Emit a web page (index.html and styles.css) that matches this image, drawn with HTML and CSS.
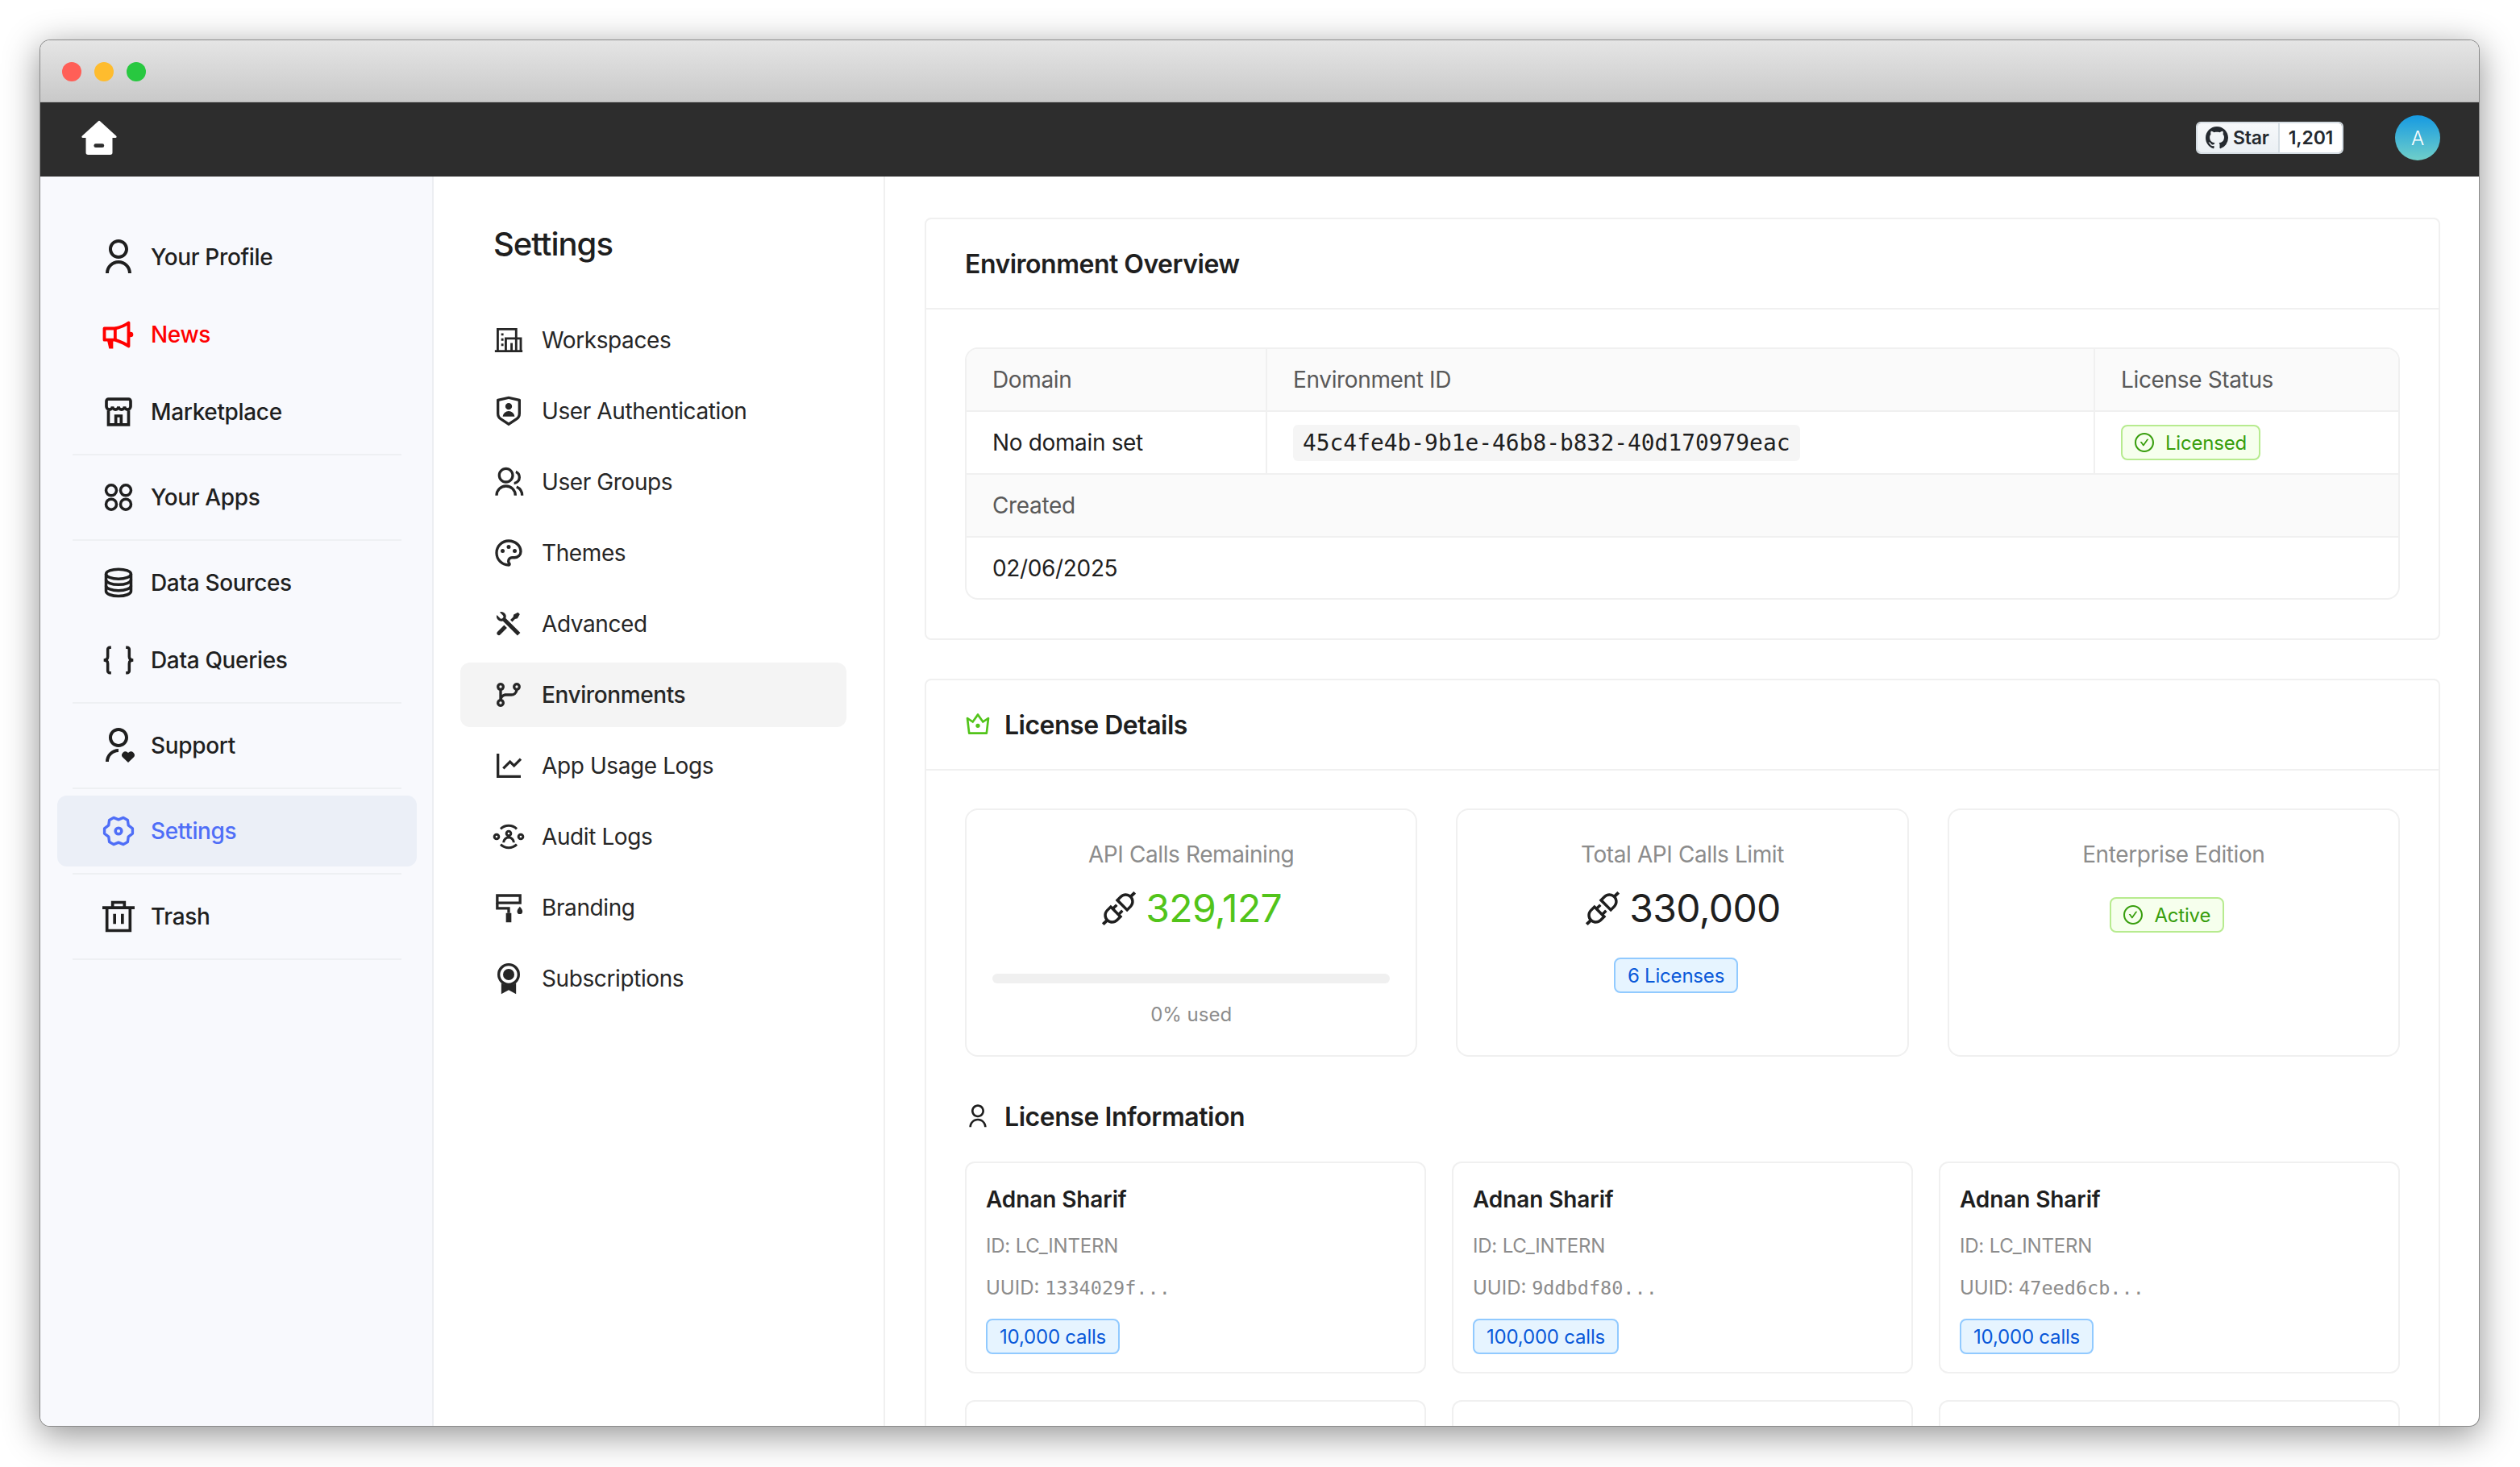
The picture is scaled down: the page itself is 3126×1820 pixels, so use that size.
FILE: index.html
```html
<!DOCTYPE html>
<html lang="en">
<head>
<meta charset="utf-8">
<title>Environments</title>
<link rel="stylesheet" href="styles.css">
</head>
<body>
<div class="window">
  <div class="titlebar"><span class="light red"></span><span class="light yellow"></span><span class="light green"></span></div>
  <header class="topnav">
    <svg class="home" viewBox="0 0 24 24"><path fill="#fff" d="M11.3.8a1 1 0 0 1 1.4 0l10.9 10a.7.7 0 0 1-.5 1.2H21v10a1.5 1.5 0 0 1-1.5 1.5h-15A1.5 1.5 0 0 1 3 22V12H.9a.7.7 0 0 1-.5-1.2z"/><rect x="8.4" y="16" width="7" height="2.6" rx="1.3" fill="#2d2d2d"/></svg>
    <div class="nav-right">
      <div class="gh">
        <span class="gh-left"><svg class="gh-mark" viewBox="0 0 16 16"><path fill="#24292f" d="M8 0C3.58 0 0 3.58 0 8c0 3.54 2.29 6.53 5.47 7.59.4.07.55-.17.55-.38 0-.19-.01-.82-.01-1.49-2.01.37-2.53-.49-2.69-.94-.09-.23-.48-.94-.82-1.13-.28-.15-.68-.52-.01-.53.63-.01 1.08.58 1.23.82.72 1.21 1.87.87 2.33.66.07-.52.28-.87.51-1.07-1.78-.2-3.64-.89-3.64-3.95 0-.87.31-1.59.82-2.15-.08-.2-.36-1.02.08-2.12 0 0 .67-.21 2.2.82.64-.18 1.32-.27 2-.27.68 0 1.36.09 2 .27 1.53-1.04 2.2-.82 2.2-.82.44 1.1.16 1.92.08 2.12.51.56.82 1.27.82 2.15 0 3.07-1.87 3.75-3.65 3.95.29.25.54.73.54 1.48 0 1.07-.01 1.93-.01 2.2 0 .21.15.46.55.38A8.013 8.013 0 0016 8c0-4.42-3.58-8-8-8z"/></svg>Star</span>
        <span class="gh-count">1,201</span>
      </div>
      <div class="avatar">A</div>
    </div>
  </header>
  <div class="shell">
    <aside class="sidebar">
      <a class="side-item"><svg class="side-icon big" viewBox="0 0 24 24"><path fill="currentColor" d="M4 22C4 17.5817 7.58172 14 12 14C16.4183 14 20 17.5817 20 22H18C18 18.6863 15.3137 16 12 16C8.68629 16 6 18.6863 6 22H4ZM12 13C8.685 13 6 10.315 6 7C6 3.685 8.685 1 12 1C15.315 1 18 3.685 18 7C18 10.315 15.315 13 12 13ZM12 11C14.21 11 16 9.21 16 7C16 4.79 14.21 3 12 3C9.79 3 8 4.79 8 7C8 9.21 9.79 11 12 11Z"/></svg>Your Profile</a>
      <a class="side-item news"><svg class="side-icon" viewBox="0 0 24 24"><g fill="none" stroke="currentColor" stroke-width="2.3" stroke-linejoin="round"><path d="M1.5 7.5H9.5V16H1.5z"/><path d="M9.500 7.500C13 6.800 16.500 5.500 19.500 3.300V20.700C16.500 18.500 13 17.200 9.500 16"/></g><path fill="currentColor" d="M3.500 16H8V22.500H5zM20 10h1a2 2 0 0 1 0 4h-1z"/></svg>News</a>
      <a class="side-item"><svg class="side-icon" viewBox="0 0 24 24"><g fill="none" stroke="currentColor" stroke-width="2.2"><path d="M4.500 11v10.500h15V11"/><path d="M4.500 2.500h15A1.500 1.500 0 0 1 21 4V8a2.250 2.250 0 0 1-4.500 0 2.250 2.250 0 0 1-4.500 0 2.250 2.250 0 0 1-4.500 0A2.250 2.250 0 0 1 3 8V4a1.500 1.500 0 0 1 1.500-1.500z"/><path d="M10 21.500V15h4v6.500"/></g></svg>Marketplace</a>
      <div class="side-divider"></div>
      <a class="side-item"><svg class="side-icon" viewBox="0 0 24 24"><g fill="none" stroke="currentColor" stroke-width="2.1"><circle cx="6.600" cy="6.800" r="3.900"/><circle cx="17.400" cy="6.800" r="3.900"/><circle cx="6.600" cy="17.200" r="3.900"/><circle cx="17.400" cy="17.200" r="3.900"/></g></svg>Your Apps</a>
      <div class="side-divider"></div>
      <a class="side-item"><svg class="side-icon" viewBox="0 0 24 24"><g fill="none" stroke="currentColor" stroke-width="2.1"><ellipse cx="12" cy="5.500" rx="9.300" ry="3.600"/><path d="M2.700 5.500v12.800c0 2 4.200 3.600 9.300 3.600s9.300-1.600 9.300-3.600V5.500"/><path d="M2.700 9.800c0 2 4.200 3.600 9.300 3.600s9.300-1.600 9.300-3.600"/><path d="M2.700 14.200c0 2 4.200 3.600 9.300 3.600s9.300-1.600 9.300-3.600"/></g></svg>Data Sources</a>
      <a class="side-item"><svg class="side-icon" viewBox="0 0 24 24"><g fill="none" stroke="currentColor" stroke-width="2.1"><path d="M6.500 2.500h-1A1.500 1.500 0 0 0 4 4v5.500c0 1.400-.8 2.500-3 2.500 2.200 0 3 1.100 3 2.500V20a1.500 1.500 0 0 0 1.500 1.500h1"/><path d="M17.500 2.500h1A1.500 1.500 0 0 1 20 4v5.500c0 1.400.8 2.500 3 2.500-2.200 0-3 1.100-3 2.500V20a1.500 1.500 0 0 1-1.500 1.500h-1"/></g></svg>Data Queries</a>
      <div class="side-divider"></div>
      <a class="side-item"><svg class="side-icon big" viewBox="0 0 24 24"><path fill="currentColor" d="M12 14v2a6 6 0 0 0-6 6H4a8 8 0 0 1 8-8zm0-1c-3.315 0-6-2.685-6-6s2.685-6 6-6 6 2.685 6 6-2.685 6-6 6zm0-2c2.210 0 4-1.790 4-4s-1.790-4-4-4-4 1.790-4 4 1.790 4 4 4z"/><path fill="currentColor" d="M18 22.500l-3.400-3.200a2.200 2.200 0 0 1 3.100-3.100l.3.300.3-.3a2.200 2.200 0 0 1 3.100 3.100z"/></svg>Support</a>
      <div class="side-divider"></div>
      <a class="side-item active"><svg class="side-icon" viewBox="-1 -1 26 26"><path fill="none" stroke="currentColor" stroke-width="2.200" stroke-linejoin="round" d="M12 2.800L15.930 1.190 19.390 3.190 19.970 7.400 23.330 10V14L19.970 16.600 19.390 20.810 15.930 22.810 12 21.200 8.070 22.810 4.610 20.810 4.030 16.600 .67 14V10L4.030 7.400 4.610 3.190 8.070 1.190Z"/><circle cx="12" cy="12" r="2.500" fill="none" stroke="currentColor" stroke-width="2.300"/></svg>Settings</a>
      <div class="side-divider"></div>
      <a class="side-item"><svg class="side-icon" viewBox="0 0 24 24"><g fill="none" stroke="currentColor" stroke-width="2.2"><path d="M0 5.500h24"/><path d="M3.400 5.500v17h17.200v-17"/><path d="M7.600 5.500V1.500h8.800v4"/></g><path fill="currentColor" d="M8 10h2.200v7.600H8zM13.800 10H16v7.600h-2.200z"/></svg>Trash</a>
      <div class="side-divider"></div>
    </aside>
    <nav class="settings">
      <h2 class="settings-title">Settings</h2>
      <a class="set-item"><svg class="set-icon" viewBox="-2 -2 28 28"><g fill="none" stroke="currentColor" stroke-width="2"><path d="M0 21.500h24"/><path d="M2.500 21.500V2.500h16v19"/><path d="M9.500 21.500V10.500h13v11"/><path d="M14.500 21.500v-7"/></g><path fill="currentColor" d="M5.500 6h2v2h-2zM5.500 10.500h2v2h-2zM5.500 15h2v2h-2z"/></svg>Workspaces</a>
      <a class="set-item"><svg class="set-icon" viewBox="0 0 24 24"><path fill="currentColor" d="M3.783 2.826L12 1l8.217 1.826a1 1 0 0 1 .783.976v9.987a6 6 0 0 1-2.672 4.992L12 23l-6.328-4.219A6 6 0 0 1 3 13.790V3.802a1 1 0 0 1 .783-.976zM5 4.604v9.185a4 4 0 0 0 1.781 3.328L12 20.597l5.219-3.480A4 4 0 0 0 19 13.790V4.604L12 3.050 5 4.604zM12 11a2.500 2.500 0 1 1 0-5 2.500 2.500 0 0 1 0 5zm-4.473 5a4.500 4.500 0 0 1 8.946 0H7.527z"/></svg>User Authentication</a>
      <a class="set-item"><svg class="set-icon" viewBox="0 0 24 24"><path fill="currentColor" d="M2 22a8 8 0 1 1 16 0h-2a6 6 0 1 0-12 0H2zm8-9c-3.315 0-6-2.685-6-6s2.685-6 6-6 6 2.685 6 6-2.685 6-6 6zm0-2c2.210 0 4-1.790 4-4s-1.790-4-4-4-4 1.790-4 4 1.790 4 4 4zm8.284 3.703A8.002 8.002 0 0 1 23 22h-2a6.001 6.001 0 0 0-3.537-5.473l.82-1.824zm-.688-11.290A5.500 5.500 0 0 1 21 8.500a5.499 5.499 0 0 1-5 5.478v-2.013a3.500 3.500 0 0 0 1.041-6.609l.555-1.943z"/></svg>User Groups</a>
      <a class="set-item"><svg class="set-icon" viewBox="0 0 24 24"><path fill="currentColor" d="M12 2c5.522 0 10 3.978 10 8.889a5.558 5.558 0 0 1-5.556 5.555h-1.966c-.922 0-1.667.745-1.667 1.667 0 .422.167.811.422 1.100.267.300.434.689.434 1.122C13.667 21.256 12.900 22 12 22 6.478 22 2 17.522 2 12S6.478 2 12 2zm-1.189 16.111a3.664 3.664 0 0 1 3.667-3.667h1.966A3.558 3.558 0 0 0 20 10.890C20 7.139 16.468 4 12 4a8 8 0 0 0-.676 15.972 3.648 3.648 0 0 1-.513-1.860zM7.500 12a1.500 1.500 0 1 1 0-3 1.500 1.500 0 0 1 0 3zm9 0a1.500 1.500 0 1 1 0-3 1.500 1.500 0 0 1 0 3zM12 9a1.500 1.500 0 1 1 0-3 1.500 1.500 0 0 1 0 3z"/></svg>Themes</a>
      <a class="set-item"><svg class="set-icon" viewBox="0 0 24 24"><path fill="currentColor" d="M5.330 3.271a3.500 3.500 0 0 1 4.472 4.474L20.647 18.590l-2.122 2.121L7.680 9.867a3.500 3.500 0 0 1-4.472-4.474L5.444 7.630a1.500 1.500 0 1 0 2.121-2.121L5.329 3.270zm10.367 1.884l3.182-1.768 1.414 1.414-1.768 3.182-1.768.354-2.120 2.121-1.415-1.414 2.121-2.121.354-1.768zm-7.071 7.778l2.121 2.122-4.950 4.950A1.500 1.500 0 0 1 3.580 17.990l.097-.107 4.950-4.950z"/></svg>Advanced</a>
      <a class="set-item current"><svg class="set-icon" viewBox="0 0 24 24"><path fill="currentColor" d="M7.105 15.210A3.001 3.001 0 1 1 5 15.170V8.830a3.001 3.001 0 1 1 2 0V12c.836-.628 1.874-1 3-1h4a3.001 3.001 0 0 0 2.895-2.210 3.001 3.001 0 1 1 2.032.064A5.001 5.001 0 0 1 14 13h-4a3.001 3.001 0 0 0-2.895 2.210zM6 17a1 1 0 1 0 0 2 1 1 0 0 0 0-2zM6 5a1 1 0 1 0 0 2 1 1 0 0 0 0-2zm12 0a1 1 0 1 0 0 2 1 1 0 0 0 0-2z"/></svg>Environments</a>
      <a class="set-item"><svg class="set-icon" viewBox="0 0 24 24"><path fill="currentColor" d="M5 3v16h16v2H3V3h2zm15.293 3.293l1.414 1.414L16 13.414l-3-2.999-4.293 4.292-1.414-1.414L13 7.586l3 2.999 4.293-4.292z"/></svg>App Usage Logs</a>
      <a class="set-item"><svg class="set-icon" viewBox="0 0 24 24"><g fill="none" stroke="currentColor" stroke-width="1.800"><circle cx="3" cy="12" r="1.700"/><circle cx="21" cy="12" r="1.700"/><circle cx="12" cy="9.600" r="1.700"/><path d="M8.200 16.400a3.800 3.800 0 0 1 7.600 0"/><path d="M6 6.200a8.600 8.600 0 0 1 12 0"/><path d="M6 17.800a8.600 8.600 0 0 0 12 0"/></g></svg>Audit Logs</a>
      <a class="set-item"><svg class="set-icon" viewBox="0 0 24 24"><g fill="none" stroke="currentColor" stroke-width="2"><path d="M3.500 3h17v5.500h-17z"/><path d="M3.500 8.500v4H12V16"/></g><path fill="currentColor" d="M10 16h4v7h-4zM20.300 11.300c1 1.400 2 2.300 2 3.500a2 2 0 0 1-4 0c0-1.200 1-2.100 2-3.500z"/></svg>Branding</a>
      <a class="set-item"><svg class="set-icon" viewBox="0 0 24 24"><circle cx="12" cy="9" r="7.400" fill="none" stroke="currentColor" stroke-width="2"/><circle cx="12" cy="9" r="4.200" fill="currentColor"/><path fill="currentColor" d="M6.500 15.500c3 2 8 2 11 0V23.500L12 20.600 6.500 23.500z"/></svg>Subscriptions</a>
    </nav>
    <main class="main">
      <section class="card">
        <div class="card-head"><h3 class="card-title">Environment Overview</h3></div>
        <div class="card-body">
          <div class="desc">
            <div class="cell label first-col">Domain</div>
            <div class="cell label mid-col">Environment ID</div>
            <div class="cell label">License Status</div>
            <div class="cell first-col">No domain set</div>
            <div class="cell mid-col"><code class="env-id">45c4fe4b-9b1e-46b8-b832-40d170979eac</code></div>
            <div class="cell"><span class="tag tag-green"><svg class="tag-icon" viewBox="64 64 896 896"><path fill="currentColor" d="M699 353h-46.900c-10.200 0-19.900 4.900-25.900 13.300L469 584.300l-71.200-98.800c-6-8.300-15.600-13.300-25.900-13.300H325c-6.500 0-10.300 7.400-6.500 12.700l124.600 172.800a31.800 31.800 0 0 0 51.700 0l210.600-292c3.900-5.300.1-12.700-6.400-12.700z"/><path fill="currentColor" d="M512 64C264.600 64 64 264.600 64 512s200.600 448 448 448 448-200.600 448-448S759.400 64 512 64zm0 820c-205.400 0-372-166.600-372-372s166.600-372 372-372 372 166.600 372 372-166.600 372-372 372z"/></svg>Licensed</span></div>
            <div class="cell label span-all">Created</div>
            <div class="cell span-all last-row">02/06/2025</div>
          </div>
        </div>
      </section>
      <section class="card second">
        <div class="card-head"><svg class="crown" viewBox="0 0 24 24"><path fill="#52c41a" d="M3.492 8.065L4.778 19h14.444l1.286-10.935-4.010 2.673L12 4.441l-4.498 6.297-4.010-2.673zM2.801 5.200L7 8l4.186-5.860a1 1 0 0 1 1.628 0L17 8l4.200-2.800a1 1 0 0 1 1.547.950l-1.643 13.967a1 1 0 0 1-.993.883H3.889a1 1 0 0 1-.993-.883L1.253 6.149A1 1 0 0 1 2.800 5.200zM12 15a2 2 0 1 1 0-4 2 2 0 0 1 0 4z"/></svg><h3 class="card-title">License Details</h3></div>
        <div class="card-body">
          <div class="stats">
            <div class="stat">
              <div class="stat-label">API Calls Remaining</div>
              <div class="stat-value good"><svg class="plug" viewBox="64 64 896 896"><path fill="#1f1f1f" d="M917.700 148.800l-42.400-42.400c-1.600-1.600-3.600-2.300-5.700-2.300s-4.100.8-5.700 2.300l-76.100 76.100a199.270 199.270 0 0 0-112.100-34.300c-51.200 0-102.400 19.500-141.500 58.600L432.300 308.700a8.030 8.030 0 0 0 0 11.300L704 591.700c1.600 1.600 3.600 2.300 5.700 2.300 2 0 4.100-.8 5.700-2.300l101.900-101.900c68.900-69 77-175.700 24.300-253.500l76.100-76.100c3.100-3.200 3.100-8.300 0-11.400zM769.100 441.700l-59.400 59.400-186.800-186.800 59.400-59.400c24.900-24.900 58.100-38.700 93.400-38.700 35.300 0 68.400 13.700 93.400 38.700 24.900 24.900 38.700 58.100 38.700 93.400 0 35.300-13.800 68.400-38.700 93.400zm-190.200 105a8.030 8.030 0 0 0-11.300 0L501 613.300 410.700 523l66.700-66.700c3.100-3.100 3.100-8.200 0-11.300L441 408.600a8.030 8.030 0 0 0-11.300 0L363 475.300l-43-43a7.850 7.850 0 0 0-5.700-2.300c-2 0-4.100.8-5.700 2.300L206.800 534.200c-68.900 69-77 175.700-24.300 253.500l-76.100 76.100a8.030 8.030 0 0 0 0 11.300l42.400 42.400c1.600 1.600 3.600 2.300 5.700 2.300s4.100-.8 5.700-2.300l76.100-76.100c33.700 22.900 72.900 34.300 112.100 34.300 51.200 0 102.400-19.500 141.500-58.600l101.900-101.900c3.100-3.100 3.100-8.200 0-11.300l-43-43 66.700-66.700c3.100-3.100 3.100-8.200 0-11.300l-36.600-36.200zM441.700 769.100a131.320 131.320 0 0 1-93.400 38.700c-35.300 0-68.400-13.700-93.400-38.700a131.320 131.320 0 0 1-38.700-93.400c0-35.300 13.700-68.400 38.700-93.400l59.400-59.400 186.800 186.800-59.400 59.400z"/></svg>329,127</div>
              <div class="bar"></div>
              <div class="bar-note">0% used</div>
            </div>
            <div class="stat">
              <div class="stat-label">Total API Calls Limit</div>
              <div class="stat-value"><svg class="plug" viewBox="64 64 896 896"><path fill="#1f1f1f" d="M917.700 148.800l-42.400-42.400c-1.600-1.600-3.600-2.300-5.700-2.300s-4.100.8-5.700 2.300l-76.100 76.100a199.270 199.270 0 0 0-112.100-34.300c-51.200 0-102.400 19.500-141.500 58.600L432.300 308.700a8.030 8.030 0 0 0 0 11.300L704 591.700c1.600 1.600 3.600 2.300 5.700 2.300 2 0 4.100-.8 5.700-2.300l101.900-101.900c68.900-69 77-175.700 24.300-253.500l76.100-76.100c3.100-3.200 3.100-8.300 0-11.400zM769.100 441.700l-59.400 59.400-186.800-186.800 59.400-59.400c24.900-24.900 58.100-38.700 93.400-38.700 35.300 0 68.400 13.700 93.400 38.700 24.900 24.900 38.700 58.100 38.700 93.400 0 35.300-13.800 68.400-38.700 93.400zm-190.200 105a8.030 8.030 0 0 0-11.300 0L501 613.300 410.700 523l66.700-66.700c3.100-3.100 3.100-8.200 0-11.300L441 408.600a8.030 8.030 0 0 0-11.300 0L363 475.300l-43-43a7.850 7.850 0 0 0-5.700-2.300c-2 0-4.100.8-5.700 2.300L206.800 534.200c-68.900 69-77 175.700-24.300 253.500l-76.100 76.100a8.030 8.030 0 0 0 0 11.300l42.400 42.400c1.600 1.600 3.600 2.300 5.700 2.300s4.100-.8 5.700-2.300l76.100-76.100c33.700 22.900 72.900 34.300 112.100 34.300 51.200 0 102.400-19.500 141.500-58.600l101.900-101.900c3.100-3.100 3.100-8.200 0-11.300l-43-43 66.700-66.700c3.100-3.100 3.100-8.200 0-11.300l-36.600-36.200zM441.700 769.100a131.320 131.320 0 0 1-93.400 38.700c-35.300 0-68.400-13.700-93.400-38.700a131.320 131.320 0 0 1-38.700-93.400c0-35.300 13.700-68.400 38.700-93.400l59.400-59.400 186.800 186.800-59.400 59.400z"/></svg>330,000</div>
              <div class="stat-tag"><span class="tag tag-blue">6 Licenses</span></div>
            </div>
            <div class="stat">
              <div class="stat-label">Enterprise Edition</div>
              <div class="stat-tag"><span class="tag tag-green"><svg class="tag-icon" viewBox="64 64 896 896"><path fill="currentColor" d="M699 353h-46.900c-10.200 0-19.900 4.900-25.900 13.300L469 584.300l-71.200-98.800c-6-8.300-15.600-13.300-25.900-13.300H325c-6.500 0-10.300 7.400-6.500 12.700l124.600 172.800a31.800 31.800 0 0 0 51.700 0l210.600-292c3.900-5.300.1-12.700-6.400-12.700z"/><path fill="currentColor" d="M512 64C264.600 64 64 264.600 64 512s200.600 448 448 448 448-200.600 448-448S759.400 64 512 64zm0 820c-205.400 0-372-166.600-372-372s166.600-372 372-372 372 166.600 372 372-166.600 372-372 372z"/></svg>Active</span></div>
            </div>
          </div>
          <h4 class="info-title"><svg class="info-icon" viewBox="0 0 24 24"><path fill="#1f1f1f" d="M4 22C4 17.5817 7.58172 14 12 14C16.4183 14 20 17.5817 20 22H18C18 18.6863 15.3137 16 12 16C8.68629 16 6 18.6863 6 22H4ZM12 13C8.685 13 6 10.315 6 7C6 3.685 8.685 1 12 1C15.315 1 18 3.685 18 7C18 10.315 15.315 13 12 13ZM12 11C14.210 11 16 9.210 16 7C16 4.790 14.210 3 12 3C9.790 3 8 4.790 8 7C8 9.210 9.790 11 12 11Z"/></svg>License Information</h4>
          <div class="licenses">
            <article class="lic">
              <div class="lic-name">Adnan Sharif</div>
              <div class="lic-id">ID: LC_INTERN</div>
              <div class="lic-uuid">UUID: <span class="mono">1334029f...</span></div>
              <span class="tag tag-blue">10,000 calls</span>
            </article>
            <article class="lic">
              <div class="lic-name">Adnan Sharif</div>
              <div class="lic-id">ID: LC_INTERN</div>
              <div class="lic-uuid">UUID: <span class="mono">9ddbdf80...</span></div>
              <span class="tag tag-blue">100,000 calls</span>
            </article>
            <article class="lic">
              <div class="lic-name">Adnan Sharif</div>
              <div class="lic-id">ID: LC_INTERN</div>
              <div class="lic-uuid">UUID: <span class="mono">47eed6cb...</span></div>
              <span class="tag tag-blue">10,000 calls</span>
            </article>
            <article class="lic lic-empty"></article>
            <article class="lic lic-empty"></article>
            <article class="lic lic-empty"></article>
          </div>
        </div>
      </section>
    </main>
  </div>
</div>
</body>
</html>
```
FILE: styles.css
```css
* { box-sizing: border-box; }
html, body { margin: 0; height: 100%; overflow: hidden; background: #fff; }
body { padding: 50px; font-family: Inter, "Liberation Sans", sans-serif; color: #1f1f1f; }

.window {
  width: 3025px; height: 1719px;
  display: flex; flex-direction: column;
  border-radius: 12px; overflow: hidden;
  background: #fff;
  box-shadow: 0 0 0 1px #8a8a8a, 0 10px 44px 2px rgba(0,0,0,.42);
}
.titlebar {
  height: 77px; flex: none;
  display: flex; align-items: center; gap: 16px; padding: 1px 0 0 27px;
  background: linear-gradient(#e5e5e5, #c9c9c9);
  border-bottom: 1px solid #b4b4b4;
}
.light { width: 24px; height: 24px; border-radius: 50%; }
.red { background: #ff5f57; }
.yellow { background: #febc2e; }
.green { background: #28c840; }

.topnav {
  height: 92px; flex: none;
  display: flex; align-items: center; justify-content: space-between;
  padding: 0 48px 4px 51px;
  background: #2d2d2d;
}
.home { width: 44px; height: 44px; }
.nav-right { display: flex; align-items: center; gap: 64px; }
.gh {
  display: flex; height: 40px; width: 183px;
  border: 2px solid #d5dde3; border-radius: 6px; overflow: hidden;
  font-size: 23px; font-weight: 600; color: #24292f; letter-spacing: -.2px;
}
.gh-left {
  width: 102px; display: flex; align-items: center; gap: 6px; padding-left: 10px;
  background: linear-gradient(#f6f8fa, #ebf0f4);
  border-right: 2px solid #d5dde3;
}
.gh-mark { width: 28px; height: 28px; }
.gh-count { flex: 1; display: flex; align-items: center; justify-content: center; background: #fff; }
.avatar {
  width: 56px; height: 56px; border-radius: 50%;
  display: flex; align-items: center; justify-content: center;
  background: linear-gradient(#169ae2, #70cfc9);
  color: #fff; font-size: 24px; font-weight: 300;
}

.shell { flex: 1; min-height: 0; display: flex; }

.sidebar {
  width: 488px; flex: none; padding: 56px 19px 0 21px;
  background: #f8f9fd; border-right: 2px solid #eceef2;
  display: flex; flex-direction: column;
}
.side-item {
  height: 88px; flex: none; margin-bottom: 8px;
  display: flex; align-items: center; gap: 20px;
  padding-left: 56px; border-radius: 12px;
  font-size: 28px; font-weight: 450; letter-spacing: -.35px; color: #1f1f1f;
}
.side-icon { width: 40px; height: 40px; flex: none; }
.side-icon.big { width: 48px; height: 48px; margin: 0 -4px; }
.side-divider { height: 2px; flex: none; margin: 0 19px 8px; background: #eef0f3; }
.news { color: #ff0000; }
.active { background: #ebeff7; color: #4f6ef7; }

.settings {
  width: 560px; flex: none; padding: 56px 46px 0 33px;
  border-right: 2px solid #f0f0f0;
  display: flex; flex-direction: column; gap: 8px;
}
.settings-title {
  margin: 0 0 43px 41px; font-size: 40px; line-height: 56px; font-weight: 500; letter-spacing: -1px; color: #1f1f1f;
}
.set-item {
  height: 80px; flex: none;
  display: flex; align-items: center; gap: 21px;
  padding-left: 40px; border-radius: 12px;
  font-size: 28px; letter-spacing: -.4px; color: #262626;
}
.set-icon { width: 40px; height: 40px; flex: none; }
.current { background: #f4f4f4; font-weight: 500; }

.main { flex: 1; min-width: 0; padding: 51px 48px 0 49px; overflow: hidden; }
.card { border: 2px solid #f0f0f0; border-radius: 8px; background: #fff; }
.card.second { margin-top: 48px; }
.card-head {
  height: 112px; display: flex; align-items: center; gap: 17px;
  padding: 0 48px; border-bottom: 2px solid #f0f0f0;
}
.card-title { margin: 0; font-size: 32px; font-weight: 600; letter-spacing: -.5px; color: #1f1f1f; }
.crown { width: 32px; height: 32px; flex: none; }
.card-body { padding: 47px 48px 48px; }

.desc {
  display: grid; grid-template-columns: 373px 1027px 1fr;
  border: 2px solid #f0f0f0; border-radius: 16px; overflow: hidden;
  font-size: 28px; letter-spacing: -.35px;
}
.cell {
  height: 78px; display: flex; align-items: center; padding: 0 32px;
  border-bottom: 2px solid #f0f0f0;
}
.label { background: #fafafa; color: #595959; }
.first-col, .mid-col { border-right: 2px solid #f0f0f0; }
.span-all { grid-column: 1 / -1; }
.last-row { height: 75px; border-bottom: 0; }
.env-id {
  font-family: "DejaVu Sans Mono", "Liberation Mono", monospace; font-size: 27.900px; letter-spacing: 0;
  background: #f5f5f5; border-radius: 6px; height: 45px; line-height: 45px; padding: 0 12px;
}
.tag {
  display: inline-flex; align-items: center; gap: 14px; height: 44px;
  padding: 0 15px; border-radius: 8px; border: 2px solid; font-size: 24px; letter-spacing: -.2px; white-space: nowrap;
}
.tag-green { background: #f6ffed; border-color: #b7eb8f; color: #389e0d; }
.tag-blue { background: #e6f4ff; border-color: #91caff; color: #0958d9; }
.tag-icon { width: 24px; height: 24px; flex: none; }

.stats { display: grid; grid-template-columns: repeat(3, 1fr); gap: 48px; }
.stat {
  height: 308px; border: 2px solid #f0f0f0; border-radius: 16px;
  padding: 33px 32px 0; display: flex; flex-direction: column; align-items: center;
}
.stat-label { font-size: 28px; line-height: 44px; letter-spacing: -.4px; color: #8c8c8c; }
.stat-value {
  margin-top: 15px; display: flex; align-items: center; gap: 10px;
  font-size: 48px; line-height: 60px; letter-spacing: -.6px; color: #1f1f1f;
}
.good { color: #52c41a; }
.plug { width: 46px; height: 46px; flex: none; }
.bar { margin-top: 51px; width: 100%; height: 12px; border-radius: 6px; background: #f0f0f0; }
.bar-note { margin-top: 21px; font-size: 24px; line-height: 36px; color: #8c8c8c; }
.stat-tag { margin-top: 31px; padding-right: 16px; }

.info-title {
  margin: 54px 0 36px; height: 40px; display: flex; align-items: center; gap: 17px;
  font-size: 32px; font-weight: 600; letter-spacing: -.45px; color: #1f1f1f;
}
.info-icon { width: 32px; height: 32px; flex: none; }
.licenses { display: grid; grid-template-columns: repeat(3, 1fr); gap: 33px 32px; }
.lic {
  height: 263px; border: 2px solid #f0f0f0; border-radius: 12px; padding: 23px 24px 0;
  display: flex; flex-direction: column; align-items: flex-start;
}
.lic-name { font-size: 28px; line-height: 44px; font-weight: 600; letter-spacing: -.1px; color: #1f1f1f; }
.lic-id { margin-top: 18px; font-size: 24px; line-height: 36px; color: #8c8c8c; letter-spacing: -.2px; }
.lic-uuid { margin-top: 16px; font-size: 24px; line-height: 36px; color: #8c8c8c; }
.mono { font-family: "DejaVu Sans Mono", "Liberation Mono", monospace; font-size: 23.500px; }
.lic .tag { margin-top: 20px; }
```
